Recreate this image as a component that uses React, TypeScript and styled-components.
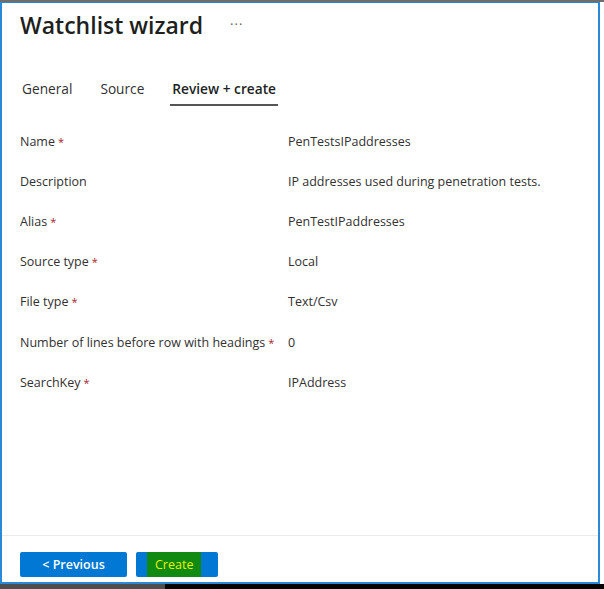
import styled, { createGlobalStyle } from 'styled-components'

const GlobalStyle = createGlobalStyle`
  html, body {
    margin: 0;
    padding: 0;
    background: #ffffff;
  }
  body {
    font-family: 'Segoe UI', 'Open Sans', 'Noto Sans', sans-serif;
  }
`

const Screen = styled.div`
  width: 604px;
  height: 589px;
  display: flex;
  flex-direction: column;
  background: #ffffff;
  overflow: hidden;
`

const TopStrip = styled.div`
  height: 2px;
  background: #6e6e6e;
  flex-shrink: 0;
`

const Middle = styled.div`
  flex: 1;
  display: flex;
`

const Panel = styled.div`
  width: 600px;
  box-sizing: border-box;
  border: 2px solid #2a8ad8;
  border-top-width: 1px;
  background: #ffffff;
  display: flex;
  flex-direction: column;
  color: #323130;
`

const BottomStrip = styled.div`
  height: 5px;
  flex-shrink: 0;
  display: flex;
  background: #050505;
`

const BottomGrey = styled.div`
  width: 165px;
  background: #4e4e4e;
`

const Header = styled.div`
  display: flex;
  align-items: center;
  padding: 5px 0 0 18px;
  height: 38px;
  box-sizing: border-box;
`

const Title = styled.h1`
  margin: 0;
  font-size: 23px;
  font-weight: 600;
  color: #201f1e;
`

const More = styled.span`
  margin-left: 27px;
  font-size: 13px;
  color: #605e5c;
  letter-spacing: 1px;
  position: relative;
  top: -1px;
`

const Tabs = styled.div`
  display: flex;
  padding: 0 0 0 18px;
  margin-top: 38px;
`

const Tab = styled.div<{ $active?: boolean }>`
  font-size: 13.7px;
  color: ${({ $active }) => ($active ? '#201f1e' : '#323130')};
  font-weight: ${({ $active }) => ($active ? 600 : 400)};
  padding: 0 2px 6px;
  margin-right: 24px;
  border-bottom: 2px solid ${({ $active }) => ($active ? '#555555' : 'transparent')};
`

const Fields = styled.div`
  display: flex;
  flex-direction: column;
  padding: 15px 0 0 18px;
  flex: 1;
`

const Row = styled.div`
  display: grid;
  grid-template-columns: 268px 1fr;
  height: 40.2px;
  align-items: center;
  font-size: 12.5px;
  color: #323130;
`

const Label = styled.span``

const Required = styled.span`
  color: #a4262c;
  margin-left: 3px;
  font-size: 11px;
`

const Value = styled.span``

const Footer = styled.div`
  border-top: 1px solid #ebebeb;
  display: flex;
  gap: 9px;
  padding: 16px 0 0 18px;
  height: 47px;
  box-sizing: border-box;
`

const Button = styled.button<{ $width: number }>`
  width: ${({ $width }) => $width}px;
  height: 25px;
  border: none;
  border-radius: 2px;
  background: #0078d4;
  color: #ffffff;
  font-family: inherit;
  font-size: 12.5px;
  font-weight: 600;
  padding: 0;
  display: flex;
  align-items: center;
  justify-content: center;
`

const CreateButton = styled(Button)`
  justify-content: flex-start;
  padding-left: 11px;
`

const Highlight = styled.span`
  background: #108a10;
  color: #e6f000;
  font-weight: 400;
  height: 100%;
  display: flex;
  align-items: center;
  padding: 0 8px;
`

const fields = [
  { label: 'Name', required: true, value: 'PenTestsIPaddresses' },
  { label: 'Description', required: false, value: 'IP addresses used during penetration tests.' },
  { label: 'Alias', required: true, value: 'PenTestIPaddresses' },
  { label: 'Source type', required: true, value: 'Local' },
  { label: 'File type', required: true, value: 'Text/Csv' },
  { label: 'Number of lines before row with headings', required: true, value: '0' },
  { label: 'SearchKey', required: true, value: 'IPAddress' },
]

export default function App() {
  return (
    <>
      <GlobalStyle />
      <Screen>
        <TopStrip />
        <Middle>
          <Panel>
            <Header>
              <Title>Watchlist wizard</Title>
              <More>···</More>
            </Header>
            <Tabs>
              <Tab>General</Tab>
              <Tab>Source</Tab>
              <Tab $active>Review + create</Tab>
            </Tabs>
            <Fields>
              {fields.map((f) => (
                <Row key={f.label}>
                  <Label>
                    {f.label}
                    {f.required && <Required>*</Required>}
                  </Label>
                  <Value>{f.value}</Value>
                </Row>
              ))}
            </Fields>
            <Footer>
              <Button $width={107}>&lt; Previous</Button>
              <CreateButton $width={82}>
                <Highlight>Create</Highlight>
              </CreateButton>
            </Footer>
          </Panel>
        </Middle>
        <BottomStrip>
          <BottomGrey />
        </BottomStrip>
      </Screen>
    </>
  )
}
